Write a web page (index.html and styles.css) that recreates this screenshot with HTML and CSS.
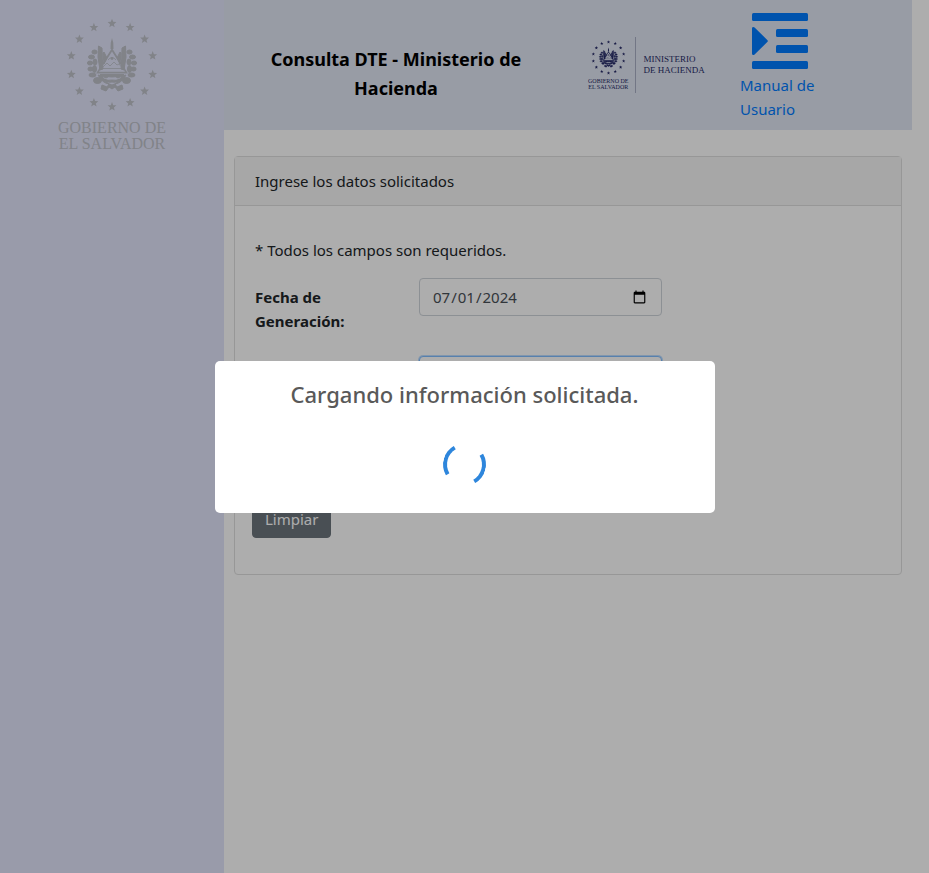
FILE: index.html
```html
<!DOCTYPE html>
<html lang="es">
<head>
<meta charset="utf-8">
<meta name="viewport" content="width=device-width, initial-scale=1">
<title>Consulta DTE - Ministerio de Hacienda</title>
<link rel="stylesheet" href="styles.css">
</head>
<body>
<svg class="defs" aria-hidden="true">
  <defs>
    <path id="star" d="M0-4.6 1.2-1.5 4.4-1.4 1.9.9 2.7 3.9 0 2.2-2.7 3.9-1.9.9-4.4-1.4-1.2-1.5Z"/>
    <g id="half" stroke="currentColor" stroke-width="1">
      <path d="M-9.500-2-10-17-13.500-19-14-8-12 5-9 4Z"/>
      <path d="M-5-7-8-13-9-12-8-1Z"/>
      <ellipse cx="-17.500" cy="-13" rx="2.600" ry="2"/>
      <ellipse cx="-20.500" cy="-8" rx="3" ry="2"/>
      <ellipse cx="-17" cy="-3" rx="2" ry="3"/>
      <ellipse cx="-22" cy="-2" rx="2.600" ry="2"/>
      <ellipse cx="-17.500" cy="4" rx="2" ry="3.500"/>
      <ellipse cx="-21.500" cy="4" rx="2.600" ry="2"/>
      <ellipse cx="-19.500" cy="10" rx="3.500" ry="2"/>
      <ellipse cx="-14.500" cy="15.500" rx="4" ry="3"/>
      <path d="M-14 10Q-10 18-3 19L-5 22-10 20-11 24-6 26-3 22 0 24V20Q-7 18-10 11Z"/>
      <path d="M-12 9.500H0V12Q-4 11-6 13L-10 11ZM-8 14Q-4 16 0 15V17Q-6 18-8 14Z"/>
    </g>
    <symbol id="emblem" viewBox="-47 -47 94 94">
      <use href="#star" transform="translate(0 -41.700)"/>
      <use href="#star" transform="translate(18.100 -37.600)"/>
      <use href="#star" transform="translate(32.600 -26)"/>
      <use href="#star" transform="translate(40.700 -9.300)"/>
      <use href="#star" transform="translate(40.700 9.300)"/>
      <use href="#star" transform="translate(32.600 26)"/>
      <use href="#star" transform="translate(18.100 37.600)"/>
      <use href="#star" transform="translate(0 41.700)"/>
      <use href="#star" transform="translate(-18.100 37.600)"/>
      <use href="#star" transform="translate(-32.600 26)"/>
      <use href="#star" transform="translate(-40.700 9.300)"/>
      <use href="#star" transform="translate(-40.700 -9.300)"/>
      <use href="#star" transform="translate(-32.600 -26)"/>
      <use href="#star" transform="translate(-18.100 -37.600)"/>
      <use href="#half"/>
      <use href="#half" transform="scale(-1 1)"/>
      <path d="M0-27Q2-22 1.500-16H-1.500Q-2-22 0-27Z"/>
      <path d="M0-17 16 8.500H-16ZM0-13.500-13 6.700H13Z" fill-rule="evenodd"/>
      <path d="M-12 5-5-2-2 1 2-3 5 0 7-1 12 5M-9 3.500H9M-4-5Q0-10 4-5" fill="none" stroke="currentColor" stroke-width=".8"/>
      <circle cy="-6.500" r="1.400"/>
    </symbol>
  </defs>
</svg>

<div class="page">
  <aside class="sidebar">
    <svg class="seal" role="img" aria-label="Escudo de El Salvador"><use href="#emblem"/></svg>
    <p class="gov-name">GOBIERNO DE<br>EL SALVADOR</p>
  </aside>

  <div class="content">
    <header class="topbar">
      <h1 class="title">Consulta DTE - Ministerio de Hacienda</h1>
      <div class="ministry">
        <div class="ministry-gov">
          <svg class="ministry-seal" aria-hidden="true"><use href="#emblem"/></svg>
          <span>GOBIERNO DE<br>EL SALVADOR</span>
        </div>
        <p class="ministry-name">MINISTERIO<br>DE HACIENDA</p>
      </div>
      <a class="manual" href="#manual">
        <svg class="manual-icon" viewBox="0 0 56 56" aria-hidden="true">
          <rect width="56" height="8" rx="1.500"/>
          <rect x="24" y="16" width="32" height="8" rx="1.500"/>
          <rect x="24" y="32" width="32" height="8" rx="1.500"/>
          <rect y="48" width="56" height="8" rx="1.500"/>
          <path d="M0 15.500C0 14 1.500 13.500 2.600 14.600L15.500 27.200Q16.200 28 15.500 28.800L2.600 41.400C1.500 42.500 0 42 0 40.500Z"/>
        </svg>
        <span>Manual de Usuario</span>
      </a>
    </header>

    <main class="main">
      <section class="card">
        <h2 class="card-header">Ingrese los datos solicitados</h2>
        <form class="card-body">
          <p class="note">* Todos los campos son requeridos.</p>
          <div class="row">
            <label class="label" for="fecha">Fecha de Generación:</label>
            <div class="field"><input class="control" type="date" id="fecha" value="2024-07-01"></div>
          </div>
          <div class="row">
            <div class="field field-offset"><input class="control control-active" type="text" aria-label="Código de Generación"></div>
          </div>
          <div class="actions"><button class="btn" type="reset">Limpiar</button></div>
        </form>
      </section>
    </main>
  </div>
</div>

<div class="overlay">
  <div class="modal" role="dialog" aria-modal="true" aria-labelledby="modal-title">
    <h2 class="modal-title" id="modal-title">Cargando información solicitada.</h2>
    <div class="loader"></div>
  </div>
</div>
</body>
</html>
```
FILE: styles.css
```css
*, *::before, *::after { box-sizing: border-box; }

body {
  margin: 0;
  background: #fff;
  color: #212529;
  font: 15px/24px "Segoe UI", "Noto Sans", sans-serif;
}

h1, h2, p { margin: 0; }

.defs { position: absolute; width: 0; height: 0; }

.page {
  display: flex;
  min-height: 100vh;
  padding-right: 17px;
}

.sidebar {
  flex: 0 0 224px;
  display: flex;
  flex-direction: column;
  align-items: center;
  padding-top: 18px;
  background: #e2e5fb;
  color: #bec1c9;
}

.seal { width: 94px; height: 94px; fill: currentColor; }

.gov-name {
  margin-top: 8px;
  font: 16px/16px "Liberation Serif", serif;
  text-align: center;
}

.content { flex: 1; min-width: 0; }

.topbar {
  display: grid;
  grid-template-columns: 2fr 1fr 1fr;
  height: 130px;
  background: #e1e6f3;
}

.title {
  padding: 45px 30px 0;
  color: #000;
  font-size: 18px;
  line-height: 29px;
  font-weight: 700;
  text-align: center;
}

.ministry {
  display: flex;
  align-self: start;
  margin: 37px 0 0 20px;
  color: #262b68;
  font-family: "Liberation Serif", serif;
}

.ministry-gov {
  display: flex;
  flex-direction: column;
  align-items: center;
  height: 56px;
  padding: 3px 6px 0 0;
  border-right: 1px solid #a9afc4;
  font-size: 6px;
  line-height: 6px;
  text-align: center;
}

.ministry-seal { width: 35px; height: 35px; margin-bottom: 3px; fill: currentColor; }

.ministry-name {
  padding: 17px 0 0 8px;
  font-size: 9px;
  line-height: 11px;
  white-space: nowrap;
}

.manual {
  width: 90px;
  padding-top: 13px;
  color: #007bff;
  text-decoration: none;
}

.manual-icon {
  display: block;
  width: 56px;
  height: 56px;
  margin: 0 0 4px 12px;
  fill: currentColor;
}

.main { padding: 26px 10px; }

.card {
  border: 1px solid #dfdfdf;
  border-radius: 4px;
}

.card-header {
  padding: 12px 20px;
  border-bottom: 1px solid #dfdfdf;
  background: #f7f7f7;
  font-size: 15px;
  line-height: 24px;
  font-weight: 400;
}

.card-body { padding: 32px 20px 36px; }

.note { margin-bottom: 16px; }

.row {
  display: flex;
  margin: 0 -15px 23px;
}

.label {
  flex: 0 0 25%;
  padding: 7px 45px 0 15px;
  font-weight: 700;
}

.field { flex: 0 0 41.6667%; padding: 0 15px; }

.field-offset { margin-left: 25%; }

.control {
  display: block;
  width: 100%;
  height: 38px;
  padding: 6px 12px;
  border: 1px solid #ced4da;
  border-radius: 4px;
  background: #fff;
  color: #495057;
  font: inherit;
}

.control-active {
  border-color: #80bdff;
  box-shadow: 0 0 0 1px rgba(0, 123, 255, .25);
}

.actions { margin: 106px -3px 0; }

.btn {
  height: 38px;
  padding: 6px 12px;
  border: 1px solid #6c757d;
  border-radius: 4px;
  background: #6c757d;
  color: #fff;
  font: inherit;
}

.overlay {
  position: fixed;
  inset: 0;
  display: flex;
  align-items: center;
  justify-content: center;
  background: rgba(0, 0, 0, .32);
}

.modal {
  display: flex;
  flex-direction: column;
  align-items: center;
  width: 500px;
  max-width: 100%;
  padding: 17px 16px 27px;
  border-radius: 5px;
  background: #fff;
}

.modal-title {
  color: #595959;
  font-size: 22px;
  line-height: 32px;
  font-weight: 500;
  text-align: center;
}

.loader {
  width: 43px;
  height: 43px;
  margin-top: 33px;
  border: 4px solid transparent;
  border-right-color: #2e86dc;
  border-left-color: #2e86dc;
  border-radius: 50%;
  transform: rotate(15deg);
}
```
